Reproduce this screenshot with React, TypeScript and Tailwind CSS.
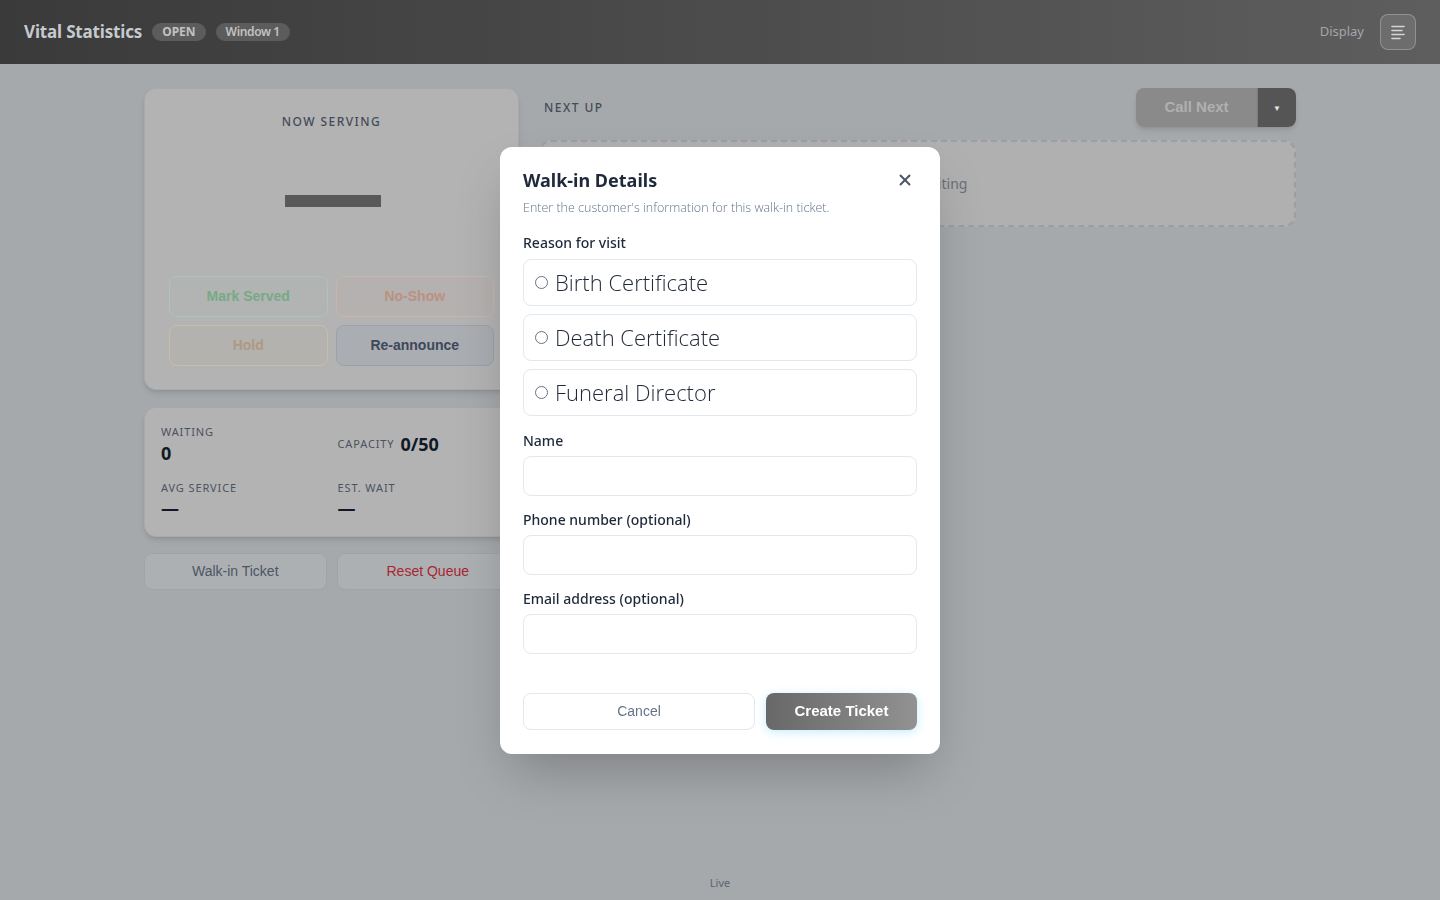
import { X } from "lucide-react";

const sans = { fontFamily: '"Noto Sans", "Open Sans", sans-serif' };

const MenuIcon = () => (
  <svg width="16" height="16" viewBox="0 0 16 16" fill="none" stroke="currentColor" strokeWidth="1.6" strokeLinecap="round">
    <path d="M2 2.5h12" />
    <path d="M2 6.5h10" />
    <path d="M2 10.5h12" />
    <path d="M2 14.5h8" />
  </svg>
);

const ActionButton = ({ label, className }: { label: string; className: string }) => (
  <button
    className={`h-[41px] rounded-lg border text-[14px] font-bold font-['Liberation_Sans',Arial,sans-serif] ${className}`}
  >
    {label}
  </button>
);

const Stat = ({ label, value }: { label: string; value: string }) => (
  <div className="flex flex-col">
    <span className="text-[11px] tracking-[0.08em] text-[#4b5260]">{label}</span>
    <span className="text-[18px] font-bold leading-6 text-[#111827]">{value}</span>
  </div>
);

const ReasonOption = ({ label }: { label: string }) => (
  <label className="flex h-[47px] items-center gap-[7px] rounded-lg border border-[#e2e8f0] px-[11px]">
    <span className="mt-px h-[13px] w-[13px] rounded-full border border-[#6b7280]" />
    <span className="text-[22px] font-light text-[#1f2937] font-['Open_Sans',sans-serif]">{label}</span>
  </label>
);

const Field = ({ label }: { label: string }) => (
  <div className="flex flex-col gap-[5px]">
    <label className="text-[14px] font-medium leading-5 text-[#1e293b]">{label}</label>
    <input className="h-10 rounded-lg border border-[#e2e8f0] bg-white px-3 outline-none" />
  </div>
);

const WalkInModal = () => (
  <div className="fixed inset-0 z-40 flex items-start justify-center pt-[147px]">
    <div className="flex w-[440px] flex-col rounded-xl bg-white px-[23px] pb-[24px] pt-[21px] shadow-2xl" style={sans}>
      <div className="flex items-center justify-between">
        <h2 className="text-[18px] font-bold leading-6 text-[#1e293b]">Walk-in Details</h2>
        <X size={18} strokeWidth={2.5} className="mr-[3px] text-[#4b5563]" />
      </div>
      <p className="mt-[7px] text-[12.5px] font-light text-[#64748b] font-['Open_Sans',sans-serif]">
        Enter the customer's information for this walk-in ticket.
      </p>

      <p className="mt-[15px] text-[14px] font-medium leading-5 text-[#1e293b]">Reason for visit</p>
      <div className="mt-[6px] flex flex-col gap-2">
        <ReasonOption label="Birth Certificate" />
        <ReasonOption label="Death Certificate" />
        <ReasonOption label="Funeral Director" />
      </div>

      <div className="mt-[15px] flex flex-col gap-[14px]">
        <Field label="Name" />
        <Field label="Phone number (optional)" />
        <Field label="Email address (optional)" />
      </div>

      <div className="mt-[39px] flex gap-[11px] font-['Liberation_Sans',Arial,sans-serif]">
        <button className="h-[37px] flex-1 rounded-lg border border-[#e2e8f0] bg-white text-[14px] text-[#64748b]">
          Cancel
        </button>
        <button className="h-[37px] w-[151px] rounded-lg bg-gradient-to-r from-[#686868] to-[#929292] text-[15px] font-bold text-white shadow-[0_2px_10px_rgba(125,211,252,0.45)]">
          Create Ticket
        </button>
      </div>
    </div>
  </div>
);

export default function App() {
  return (
    <div className="flex min-h-screen flex-col bg-[#a6a9ac]" style={sans}>
      <header className="flex h-16 items-center justify-between bg-gradient-to-r from-[#3a3a3a] to-[#5e5e5e] px-6">
        <div className="flex items-center gap-[10px]">
          <h1 className="text-[17px] font-bold tracking-[-0.01em] text-[#c6cacf]">Vital Statistics</h1>
          <span className="rounded-full bg-[#5c5c5c] px-[10px] text-[12px] font-bold leading-[18px] text-[#c2c2c2]">OPEN</span>
          <span className="rounded-full bg-[#5c5c5c] px-[10px] text-[12px] font-semibold leading-[18px] tracking-[-0.03em] text-[#c2c2c2]">
            Window 1
          </span>
        </div>
        <div className="flex items-center gap-4">
          <span className="text-[13px] text-[#a3a7ad]">Display</span>
          <button className="flex h-9 w-9 items-center justify-center rounded-lg border border-white/25 bg-white/10 text-[#d4d4d4]">
            <MenuIcon />
          </button>
        </div>
      </header>

      <main className="mx-auto grid w-[1152px] grid-cols-[375px_1fr] gap-5 pt-6">
        <div className="flex flex-col">
          <section className="flex h-[302px] flex-col items-center rounded-xl border border-[#a7abaf] bg-[#b3b3b3] px-6 pt-[24px] shadow-md">
            <h2 className="text-[12px] font-medium tracking-[0.12em] text-[#434b58]">NOW SERVING</h2>
            <div className="mt-[64px] ml-[3px] h-3 w-[96px] bg-[#595959]" />
            <div className="mt-[69px] grid w-full grid-cols-2 gap-[8px]">
              <ActionButton label="Mark Served" className="border-[#a9c6bb] bg-[#b1b4b2] text-[#78a986]" />
              <ActionButton label="No-Show" className="border-[#c8b6ab] bg-[#b4b1b0] text-[#bb917f]" />
              <ActionButton label="Hold" className="border-[#c6bfa8] bg-[#b3b2ae] text-[#ad9a80]" />
              <ActionButton label="Re-announce" className="border-[#9ba2ae] bg-[#aaadb1] text-[#3d485a]" />
            </div>
          </section>

          <section className="mt-[17px] grid grid-cols-2 gap-x-3 gap-y-[15px] rounded-xl border border-[#a7abaf] bg-[#b3b3b3] px-4 pb-[16px] pt-[16px] shadow-md">
            <Stat label="WAITING" value="0" />
            <div className="flex items-center gap-[6px]">
              <span className="text-[11px] tracking-[0.08em] text-[#4b5260]">CAPACITY</span>
              <span className="text-[18px] font-bold text-[#111827]">0/50</span>
            </div>
            <Stat label="AVG SERVICE" value="—" />
            <Stat label="EST. WAIT" value="—" />
          </section>

          <div className="mt-[16px] grid grid-cols-2 gap-[10px] font-['Liberation_Sans',Arial,sans-serif]">
            <button className="h-[37px] rounded-lg border border-[#a0a4a8] bg-[#adb0b3] text-[14px] text-[#4b5563]">
              Walk-in Ticket
            </button>
            <button className="h-[37px] rounded-lg border border-[#a0a4a8] bg-[#adb0b3] text-[14px] text-[#a8262f]">
              Reset Queue
            </button>
          </div>
        </div>

        <div className="flex flex-col">
          <div className="flex items-center justify-between">
            <h2 className="pl-[5px] text-[12px] font-medium tracking-[0.12em] text-[#434b58]">NEXT UP</h2>
            <div className="flex h-[39px] overflow-hidden rounded-lg shadow-md">
              <button className="w-[121px] bg-[#8a8a8a] text-[15px] font-bold text-[#b0b0b0] font-['Liberation_Sans',Arial,sans-serif]">
                Call Next
              </button>
              <button className="flex w-[39px] items-center justify-center border-l border-[#7a7a7a] bg-[#555555] text-[8px] text-[#e5e5e5]">
                ▼
              </button>
            </div>
          </div>
          <div className="mt-[13px] flex h-[87px] items-center justify-center rounded-xl border-2 border-dashed border-[#9b9fa4] bg-[#b0b0b0] text-[14px] text-[#6b6f75]">
            No one waiting
          </div>
        </div>
      </main>

      <footer className="mt-auto pb-[9px] text-center text-[11px] text-[#5b6470]">Live</footer>

      <WalkInModal />
    </div>
  );
}
